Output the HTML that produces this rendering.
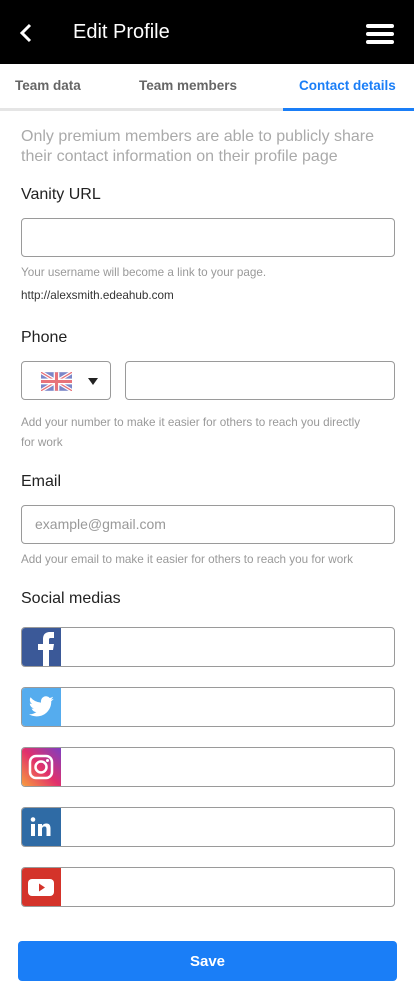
<!DOCTYPE html>
<html><head><meta charset="utf-8"><style>
*{box-sizing:border-box;margin:0;padding:0}
body{width:414px;height:1002px;background:#fff;font-family:"Liberation Sans",Roboto,sans-serif;position:relative;overflow:hidden;color:#333}
.a{position:absolute}
.hdr{left:0;top:0;width:414px;height:64px;background:#000}
.tab{top:78px;font-size:13.5px;font-weight:bold;color:#666}
.lbl{left:21px;font-size:16px;color:#222;font-weight:500}
.inp{border:1px solid #9a9a9a;border-radius:4px;background:#fff}
.hint{left:21px;font-size:11.7px;color:#999}
.soc{left:21px;width:374px;height:40px;border:1px solid #9a9a9a;border-radius:4px;overflow:hidden}
.ic{position:absolute;left:-1px;top:-1px;width:40px;height:40px;border-radius:4px 0 0 4px}
</style></head><body>
<div class="a hdr"></div>
<svg class="a" style="left:18px;top:22px" width="16" height="22" viewBox="0 0 16 22"><path d="M12 3L4 11l8 8" stroke="#fff" stroke-width="3" fill="none"/></svg>
<div class="a" style="left:73px;top:21px;color:#fff;font-size:20px">Edit Profile</div>
<svg class="a" style="left:366px;top:24px" width="29" height="20"><rect x="0" y="0" width="28" height="4" rx="2" fill="#fff"/><rect x="0" y="8" width="28" height="4" rx="2" fill="#fff"/><rect x="0" y="16" width="28" height="4" rx="2" fill="#fff"/></svg>
<div class="a tab" style="left:15px">Team data</div>
<div class="a tab" style="left:139px">Team members</div>
<div class="a tab" style="left:299px;color:#1a7ef7">Contact details</div>
<div class="a" style="left:0;top:108px;width:414px;height:3px;background:#e5e5e5"></div>
<div class="a" style="left:283px;top:108px;width:131px;height:3px;background:#1a7ef7"></div>
<div class="a" style="left:21px;top:127px;font-size:16px;line-height:20px;color:#aaa;width:380px">Only premium members are able to publicly share their contact information on their profile page</div>
<div class="a lbl" style="top:186px">Vanity URL</div>
<div class="a inp" style="left:21px;top:218px;width:374px;height:39px"></div>
<div class="a hint" style="top:266px">Your username will become a link to your page.</div>
<div class="a hint" style="top:289px;color:#333">http://alexsmith.edeahub.com</div>
<div class="a lbl" style="top:329px">Phone</div>
<div class="a inp" style="left:21px;top:361px;width:90px;height:39px"></div>
<svg class="a" style="left:41px;top:372px" width="31" height="19" viewBox="0 0 60 36"><rect width="60" height="36" fill="#7b86c8"/><path d="M0 0L60 36M60 0L0 36" stroke="#fff" stroke-width="7"/><path d="M0 0L60 36M60 0L0 36" stroke="#e8737a" stroke-width="2.5"/><path d="M30 0V36M0 18H60" stroke="#fff" stroke-width="11"/><path d="M30 0V36M0 18H60" stroke="#e8737a" stroke-width="6"/></svg>
<svg class="a" style="left:88px;top:378px" width="10" height="7"><path d="M0 0h10L5 7z" fill="#222"/></svg>
<div class="a inp" style="left:125px;top:361px;width:270px;height:39px"></div>
<div class="a hint" style="top:413px;line-height:20px;width:350px">Add your number to make it easier for others to reach you directly for work</div>
<div class="a lbl" style="top:473px">Email</div>
<div class="a inp" style="left:21px;top:505px;width:374px;height:39px"></div>
<div class="a" style="left:35px;top:516px;font-size:14px;color:#999">example@gmail.com</div>
<div class="a hint" style="top:553px">Add your email to make it easier for others to reach you for work</div>
<div class="a lbl" style="top:590px">Social medias</div>
<div class="a soc" style="top:627px"><div class="ic" style="background:#3b5998"><svg width="40" height="40" viewBox="0 0 40 40"><path d="M22 40V23h-5v-6h5v-5c0-5 3-7 7-7h4v6h-3c-2 0-2 1-2 2v4h5l-1 6h-4v17z" fill="#fff"/></svg></div></div>
<div class="a soc" style="top:687px"><div class="ic" style="background:#55acee"><svg width="40" height="40" viewBox="0 0 24 24"><path transform="translate(4 4) scale(.68)" d="M23 4.5c-.8.4-1.7.6-2.6.7.9-.6 1.6-1.400 2-2.500-.9.5-1.900.9-2.900 1.100A4.5 4.5 0 0011.8 7.9 12.8 12.8 0 012.5 3.2a4.5 4.5 0 001.4 6c-.7 0-1.4-.2-2-.6 0 2.2 1.6 4 3.6 4.4-.7.2-1.4.2-2 .1.6 1.8 2.2 3.1 4.2 3.1A9 9 0 011 18.1 12.8 12.8 0 008 20c8.3 0 12.8-6.9 12.8-12.8v-.6c.9-.6 1.6-1.4 2.2-2.1z" fill="#fff"/></svg></div></div>
<div class="a soc" style="top:747px"><div class="ic" style="background:linear-gradient(45deg,#f9a23b,#e1306c 50%,#7b3fc4)"><svg width="40" height="40"><rect x="9" y="9" width="22" height="22" rx="6" stroke="#fff" stroke-width="2.5" fill="none"/><circle cx="20" cy="20" r="5.5" stroke="#fff" stroke-width="2.5" fill="none"/><circle cx="26.5" cy="13.5" r="1.5" fill="#fff"/></svg></div></div>
<div class="a soc" style="top:807px"><div class="ic" style="background:#2f6ba5"><svg width="40" height="40"><rect x="10" y="17" width="4" height="12" fill="#fff"/><circle cx="12" cy="12.5" r="2.3" fill="#fff"/><path d="M17 17h4v2c1-2 3-2.5 4.5-2.5 3 0 4 2 4 5V29h-4v-7c0-1.5-.5-2.5-2-2.5s-2.5 1-2.5 2.5v7h-4z" fill="#fff"/></svg></div></div>
<div class="a soc" style="top:867px"><div class="ic" style="background:#d4332a"><svg width="40" height="40"><rect x="7" y="12" width="26" height="17" rx="4" fill="#fff"/><path d="M18 16.5v8l6-4z" fill="#d4332a"/></svg></div></div>
<div class="a" style="left:18px;top:941px;width:379px;height:40px;background:#1a7ef7;border-radius:4px;color:#fff;font-weight:bold;font-size:15px;text-align:center;line-height:41px">Save</div>
</body></html>
